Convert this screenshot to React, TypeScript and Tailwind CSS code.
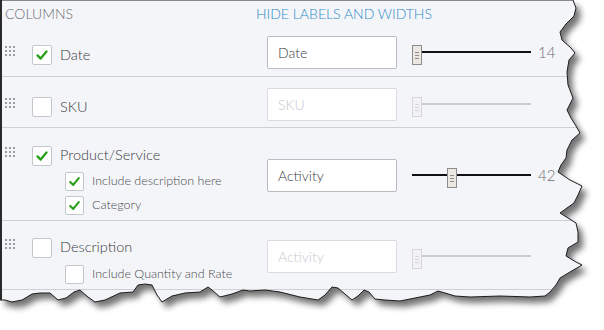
import React from 'react';

/* Column settings panel, torn-paper screenshot style */

const FONT = "font-['Lato','Liberation_Sans',sans-serif] font-light";

function Handle() {
  return (
    <div className="grid grid-cols-3 gap-[2px] w-[10px] ml-[3px] mr-[17px] mt-[1px]">
      {Array.from({ length: 9 }).map((_, i) => (
        <div key={i} className="w-[2px] h-[2px] bg-[#9b9da2]" />
      ))}
    </div>
  );
}

function Box({ checked, size = 20 }: { checked?: boolean; size?: number }) {
  const cls = size === 20 ? 'w-[20px] h-[20px]' : 'w-[19px] h-[19px]';
  return (
    <div className={`${cls} shrink-0 bg-white border border-[#c3c6cb] rounded-[2px] flex items-center justify-center`}>
      {checked && (
        <svg viewBox="0 0 20 20" className="w-full h-full">
          <path d="M5 10.5 L8.5 14 L15 6" fill="none" stroke="#2ca01c" strokeWidth="2.6" strokeLinecap="round" strokeLinejoin="round" />
        </svg>
      )}
    </div>
  );
}

function Slider({ pos, value, disabled }: { pos: number; value?: string; disabled?: boolean }) {
  return (
    <div className="flex items-center">
      <div className="relative w-[119px] h-[33px] ml-[15px]">
        <div className={`absolute left-0 right-0 top-[15px] h-[1.5px] ${disabled ? 'bg-[#c9cbcf]' : 'bg-[#111]'}`} />
        <div
          className={`absolute top-[9px] w-[10px] h-[20px] flex flex-col items-center justify-center gap-[2px] border ${
            disabled ? 'border-[#d6d7da] bg-[#f2f2f2]' : 'border-[#8c8c8c] bg-[#ebe8e2]'
          }`}
          style={{ left: pos }}
        >
          <div className={`w-[4px] h-[1px] ${disabled ? 'bg-[#d6d7da]' : 'bg-[#8c8c8c]'}`} />
          <div className={`w-[4px] h-[1px] ${disabled ? 'bg-[#d6d7da]' : 'bg-[#8c8c8c]'}`} />
          <div className={`w-[4px] h-[1px] ${disabled ? 'bg-[#d6d7da]' : 'bg-[#8c8c8c]'}`} />
        </div>
      </div>
      {value && <span className="ml-[7px] text-[15px] text-[#6b6c72]">{value}</span>}
    </div>
  );
}

function Field({ text, disabled }: { text: string; disabled?: boolean }) {
  return (
    <div
      className={`w-[130px] h-[33px] bg-white border rounded-[2px] flex items-center px-[10px] text-[14px] ${
        disabled ? 'border-[#d9dbdf] text-[#c6c8cc]' : 'border-[#b9bcc2] text-[#393a3d]'
      }`}
    >
      {text}
    </div>
  );
}

function SubOption({ label, checked }: { label: string; checked?: boolean }) {
  return (
    <div className="flex items-center ml-[63px]">
      <Box checked={checked} size={19} />
      <span className="ml-[8px] text-[12.5px] text-[#4a4b4f]">{label}</span>
    </div>
  );
}

// the torn right/bottom edge of the screenshot
const EDGE =
  'M0,0 L573,0 L576,8 L574,16 L566,24 L560,32 L562,40 L571,48 L575,53 L569,60 L567,72 L568,85 L573,98 L567,110 L571,118 L576,126 L580,133 L572,140 L567,150 L566,158 L561,165 L558,172 L570,180 L582,186 L578,195 L574,203 L560,213 L568,218 L576,223 L578,232 L578,242 L568,248 L566,256 L576,262 L582,265 L570,272 L560,278 L556,285 L550,292 L545,296 L530,297 L500,296 L470,297 L455,296 L445,293 L438,291 L430,295 L415,298 L400,301 L385,300 L375,299 L369,292 L364,290 L358,296 L352,300 L345,294 L338,288 L332,287 L325,295 L318,300 L300,297 L280,292 L265,290 L250,291 L243,290 L232,294 L220,297 L212,290 L208,287 L200,292 L185,293 L172,296 L162,302 L157,295 L152,285 L145,284 L138,285 L133,292 L120,293 L105,300 L95,302 L88,297 L80,290 L74,292 L66,298 L58,300 L50,293 L40,293 L32,294 L22,300 L12,302 L5,300 L0,300 Z';

function TornEdge() {
  return (
    <svg className="absolute inset-0 pointer-events-none" width="604" height="330" viewBox="0 0 604 330">
      <defs>
        <clipPath id="outside">
          <path clipRule="evenodd" d={`M0,0 H604 V330 H0 Z ${EDGE}`} />
        </clipPath>
        <filter id="blur" x="-10%" y="-10%" width="120%" height="120%">
          <feGaussianBlur stdDeviation="3" />
        </filter>
      </defs>
      <path fillRule="evenodd" fill="#fff" d={`M0,0 H604 V330 H0 Z ${EDGE}`} />
      <g clipPath="url(#outside)">
        <path d={EDGE} fill="#000" opacity="0.55" filter="url(#blur)" transform="translate(5,6)" />
      </g>
      <path d={EDGE} fill="none" stroke="#1d1d1d" strokeWidth="1" />
      <path d="M1,0 V300" stroke="#2a2a2a" strokeWidth="2" />
    </svg>
  );
}

export default function App() {
  return (
    <div className={`relative w-[604px] h-[330px] overflow-hidden bg-white ${FONT}`}>
      <div className="w-[604px] h-[330px] bg-[#f4f5f8] pl-[2px] pt-[1px]">
        {/* header */}
        <div className="h-[24px] flex items-center text-[14px]">
          <span className="ml-[3px] w-[251px] text-[#6b6c72]">COLUMNS</span>
          <span className="text-[#2d8ac9]">HIDE LABELS AND WIDTHS</span>
        </div>

        {/* Date */}
        <div className="h-[52px] border-b border-[#cdd0d5] flex">
          <div className="w-[265px] pt-[20px] flex items-start">
            <Handle />
            <Box checked />
            <span className="ml-[8px] text-[14.5px] leading-[20px] text-[#393a3d]">Date</span>
          </div>
          <div className="mt-[11px] flex items-start h-[33px]">
            <Field text="Date" />
            <Slider pos={0} value="14" />
          </div>
        </div>

        {/* SKU */}
        <div className="h-[51px] border-b border-[#cdd0d5] flex">
          <div className="w-[265px] pt-[20px] flex items-start">
            <Handle />
            <Box />
            <span className="ml-[8px] text-[14.5px] leading-[20px] text-[#393a3d]">SKU</span>
          </div>
          <div className="mt-[11px] flex items-start h-[33px]">
            <Field text="SKU" disabled />
            <Slider pos={0} disabled />
          </div>
        </div>

        {/* Product/Service */}
        <div className="h-[93px] border-b border-[#cdd0d5] flex">
          <div className="w-[265px] pt-[18px] flex flex-col gap-[5px]">
            <div className="flex items-start mb-[1px]">
              <Handle />
              <Box checked />
              <span className="ml-[8px] text-[14.5px] leading-[18px] text-[#393a3d]">Product/Service</span>
            </div>
            <SubOption label="Include description here" checked />
            <SubOption label="Category" checked />
          </div>
          <div className="mt-[31px] flex items-start h-[33px]">
            <Field text="Activity" />
            <Slider pos={35} value="42" />
          </div>
        </div>

        {/* Description */}
        <div className="h-[69px] border-b border-[#cdd0d5] flex">
          <div className="w-[265px] pt-[17px] flex flex-col gap-[7px]">
            <div className="flex items-start">
              <Handle />
              <Box />
              <span className="ml-[8px] text-[14.5px] leading-[18px] text-[#393a3d]">Description</span>
            </div>
            <SubOption label="Include Quantity and Rate" />
          </div>
          <div className="mt-[19px] flex items-start h-[33px]">
            <Field text="Activity" disabled />
            <Slider pos={0} disabled />
          </div>
        </div>
      </div>
      <TornEdge />
    </div>
  );
}
